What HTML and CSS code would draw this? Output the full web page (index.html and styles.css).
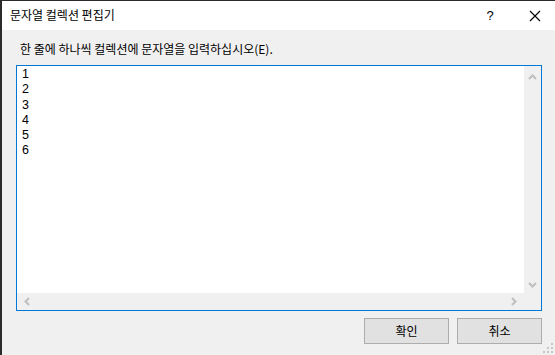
FILE: index.html
```html
<!DOCTYPE html>
<html>
<head>
  <meta charset="utf-8">
  <title>문자열 컬렉션 편집기</title>
  <link rel="stylesheet" href="styles.css">
</head>
<body>
  <div class="window">
    <div class="titlebar">
      <span class="title">문자열 컬렉션 편집기</span>
      <span class="help">?</span>
      <span class="close">
        <svg width="12" height="12" viewBox="0 0 12 12"><path d="M1 1 L11 11 M11 1 L1 11" stroke="#000" stroke-width="1.1" fill="none"/></svg>
      </span>
    </div>

    <div class="content">
      <div class="label">한 줄에 하나씩 컬렉션에 문자열을 입력하십시오(E).</div>

      <div class="editor">
        <div class="edit-row">
          <div class="lines">
            <div class="line">1</div>
            <div class="line">2</div>
            <div class="line">3</div>
            <div class="line">4</div>
            <div class="line">5</div>
            <div class="line">6</div>
          </div>
          <div class="vscroll">
            <svg width="9" height="6" viewBox="0 0 9 6"><path d="M1 5 L4.5 1.5 L8 5" stroke="#bfbfbf" stroke-width="2" fill="none"/></svg>
            <svg width="9" height="6" viewBox="0 0 9 6"><path d="M1 1 L4.5 4.5 L8 1" stroke="#bfbfbf" stroke-width="2" fill="none"/></svg>
          </div>
        </div>
        <div class="hscroll-row">
          <div class="hscroll">
            <svg width="6" height="9" viewBox="0 0 6 9"><path d="M5 1 L1.5 4.5 L5 8" stroke="#bfbfbf" stroke-width="2" fill="none"/></svg>
            <svg width="6" height="9" viewBox="0 0 6 9"><path d="M1 1 L4.5 4.5 L1 8" stroke="#bfbfbf" stroke-width="2" fill="none"/></svg>
          </div>
          <div class="corner"></div>
        </div>
      </div>

      <div class="buttons">
        <button class="btn">확인</button>
        <button class="btn">취소</button>
      </div>
    </div>

    <svg class="grip" width="10" height="10" viewBox="0 0 10 10">
      <rect x="8" y="0" width="2" height="2" fill="#c8c8c8"/>
      <rect x="4" y="4" width="2" height="2" fill="#c8c8c8"/>
      <rect x="8" y="4" width="2" height="2" fill="#c8c8c8"/>
      <rect x="0" y="8" width="2" height="2" fill="#c8c8c8"/>
      <rect x="4" y="8" width="2" height="2" fill="#c8c8c8"/>
      <rect x="8" y="8" width="2" height="2" fill="#c8c8c8"/>
    </svg>
  </div>
</body>
</html>
```

FILE: styles.css
```css
html, body {
  margin: 0;
  padding: 0;
}

body {
  width: 555px;
  height: 355px;
  overflow: hidden;
  font-family: "Noto Sans CJK KR", "Noto Sans", sans-serif;
  font-size: 12px;
  color: #000;
}

.window {
  position: relative;
  box-sizing: border-box;
  width: 555px;
  height: 355px;
  border-top: 1px solid #2b2b2b;
  border-left: 2px solid #2b2b2b;
  background: #f0f0f0;
}

.titlebar {
  display: flex;
  align-items: center;
  height: 29px;
  background: #fff;
  padding-left: 8px;
}

.title {
  flex: 1;
  line-height: 16px;
  padding-bottom: 1px;
}

.help {
  width: 14px;
  margin-right: 32px;
  font-family: "Liberation Sans", sans-serif;
  font-size: 13px;
  text-align: center;
}

.close {
  display: flex;
  width: 12px;
  margin-right: 14px;
}

.content {
  padding: 11px 0 0 14px;
}

.label {
  line-height: 16px;
  padding-left: 4px;
  height: 24px;
}

.editor {
  width: 524px;
  height: 244px;
  border: 1px solid #0078d7;
  background: #fff;
  display: flex;
  flex-direction: column;
}

.edit-row {
  display: flex;
  height: 227px;
}

.lines {
  flex: 1;
  padding: 1px 0 0 5px;
  font-family: "Liberation Sans", Arial, sans-serif;
  font-size: 12.5px;
}

.line {
  height: 15.3px;
  line-height: 15.3px;
}

.vscroll {
  width: 17px;
  background: #f0f0f0;
  display: flex;
  flex-direction: column;
  justify-content: space-between;
  align-items: center;
  padding: 8px 0 5px;
  box-sizing: border-box;
}

.hscroll-row {
  display: flex;
  height: 17px;
}

.hscroll {
  flex: 1;
  background: #f0f0f0;
  display: flex;
  align-items: center;
  justify-content: space-between;
  padding: 0 7px;
}

.corner {
  width: 17px;
  background: #f0f0f0;
}

.buttons {
  display: flex;
  justify-content: flex-end;
  gap: 8px;
  width: 526px;
  margin-top: 7px;
}

.btn {
  width: 85px;
  height: 26px;
  border: 1px solid #adadad;
  background: #e1e1e1;
  font-family: "Noto Sans CJK KR", sans-serif;
  font-size: 12px;
  color: #000;
  padding: 0;
  line-height: 16px;
}

.grip {
  position: absolute;
  right: 2px;
  bottom: 2px;
}
```
